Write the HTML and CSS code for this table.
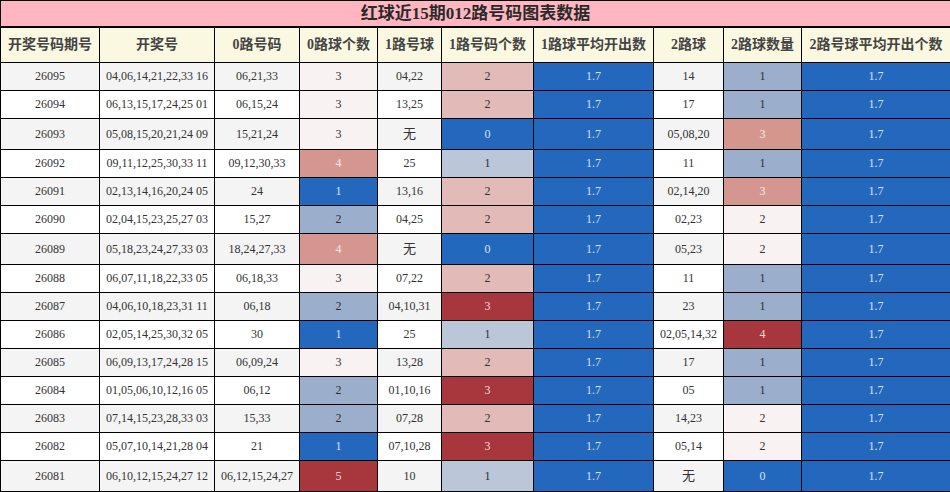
FILE: index.html
```html
<!DOCTYPE html>
<html lang="zh-CN">
<head>
<meta charset="utf-8">
<title>红球近15期012路号码图表数据</title>
<link rel="stylesheet" href="styles.css">
</head>
<body>
<table class="chart">
  <colgroup>
    <col class="w1"><col class="w2"><col class="w3"><col class="w4"><col class="w5">
    <col class="w6"><col class="w7"><col class="w8"><col class="w9"><col class="w10">
  </colgroup>
  <thead>
    <tr><th class="title" colspan="10">红球近15期012路号码图表数据</th></tr>
    <tr class="head">
      <th>开奖号码期号</th><th>开奖号</th><th>0路号码</th><th>0路球个数</th><th>1路号球</th>
      <th>1路号码个数</th><th>1路球平均开出数</th><th>2路球</th><th>2路球数量</th><th>2路号球平均开出个数</th>
    </tr>
  </thead>
  <tbody>
    <tr class="odd"><td>26095</td><td>04,06,14,21,22,33 16</td><td>06,21,33</td><td class="vlp">3</td><td>04,22</td><td class="lp">2</td><td class="blue">1.7</td><td>14</td><td class="bg">1</td><td class="blue">1.7</td></tr>
    <tr><td>26094</td><td>06,13,15,17,24,25 01</td><td>06,15,24</td><td class="vlp">3</td><td>13,25</td><td class="lp">2</td><td class="blue">1.7</td><td>17</td><td class="bg">1</td><td class="blue">1.7</td></tr>
    <tr class="odd"><td>26093</td><td>05,08,15,20,21,24 09</td><td>15,21,24</td><td class="vlp">3</td><td class="none">无</td><td class="blue">0</td><td class="blue">1.7</td><td>05,08,20</td><td class="mp">3</td><td class="blue">1.7</td></tr>
    <tr><td>26092</td><td>09,11,12,25,30,33 11</td><td>09,12,30,33</td><td class="mp">4</td><td>25</td><td class="lbg">1</td><td class="blue">1.7</td><td>11</td><td class="bg">1</td><td class="blue">1.7</td></tr>
    <tr class="odd"><td>26091</td><td>02,13,14,16,20,24 05</td><td>24</td><td class="blue">1</td><td>13,16</td><td class="lp">2</td><td class="blue">1.7</td><td>02,14,20</td><td class="mp">3</td><td class="blue">1.7</td></tr>
    <tr><td>26090</td><td>02,04,15,23,25,27 03</td><td>15,27</td><td class="bg">2</td><td>04,25</td><td class="lp">2</td><td class="blue">1.7</td><td>02,23</td><td class="vlp">2</td><td class="blue">1.7</td></tr>
    <tr class="odd"><td>26089</td><td>05,18,23,24,27,33 03</td><td>18,24,27,33</td><td class="mp">4</td><td class="none">无</td><td class="blue">0</td><td class="blue">1.7</td><td>05,23</td><td class="vlp">2</td><td class="blue">1.7</td></tr>
    <tr><td>26088</td><td>06,07,11,18,22,33 05</td><td>06,18,33</td><td class="vlp">3</td><td>07,22</td><td class="lp">2</td><td class="blue">1.7</td><td>11</td><td class="bg">1</td><td class="blue">1.7</td></tr>
    <tr class="odd"><td>26087</td><td>04,06,10,18,23,31 11</td><td>06,18</td><td class="bg">2</td><td>04,10,31</td><td class="dr">3</td><td class="blue">1.7</td><td>23</td><td class="bg">1</td><td class="blue">1.7</td></tr>
    <tr><td>26086</td><td>02,05,14,25,30,32 05</td><td>30</td><td class="blue">1</td><td>25</td><td class="lbg">1</td><td class="blue">1.7</td><td>02,05,14,32</td><td class="dr">4</td><td class="blue">1.7</td></tr>
    <tr class="odd"><td>26085</td><td>06,09,13,17,24,28 15</td><td>06,09,24</td><td class="vlp">3</td><td>13,28</td><td class="lp">2</td><td class="blue">1.7</td><td>17</td><td class="bg">1</td><td class="blue">1.7</td></tr>
    <tr><td>26084</td><td>01,05,06,10,12,16 05</td><td>06,12</td><td class="bg">2</td><td>01,10,16</td><td class="dr">3</td><td class="blue">1.7</td><td>05</td><td class="bg">1</td><td class="blue">1.7</td></tr>
    <tr class="odd"><td>26083</td><td>07,14,15,23,28,33 03</td><td>15,33</td><td class="bg">2</td><td>07,28</td><td class="lp">2</td><td class="blue">1.7</td><td>14,23</td><td class="vlp">2</td><td class="blue">1.7</td></tr>
    <tr><td>26082</td><td>05,07,10,14,21,28 04</td><td>21</td><td class="blue">1</td><td>07,10,28</td><td class="dr">3</td><td class="blue">1.7</td><td>05,14</td><td class="vlp">2</td><td class="blue">1.7</td></tr>
    <tr class="odd"><td>26081</td><td>06,10,12,15,24,27 12</td><td>06,12,15,24,27</td><td class="dr">5</td><td>10</td><td class="lbg">1</td><td class="blue">1.7</td><td class="none">无</td><td class="blue">0</td><td class="blue">1.7</td></tr>
  </tbody>
</table>
</body>
</html>
```
FILE: styles.css
```css
html, body {
  margin: 0;
  padding: 0;
  background: #ffffff;
}

.chart {
  width: 950px;
  border-collapse: collapse;
  table-layout: fixed;
  font-family: "Liberation Serif", "Noto Sans CJK SC", serif;
  font-size: 12px;
  color: #333333;
}

.w1 { width: 99px; }
.w2 { width: 115px; }
.w3 { width: 85px; }
.w4 { width: 78px; }
.w5 { width: 64px; }
.w6 { width: 92px; }
.w7 { width: 120px; }
.w8 { width: 70px; }
.w9 { width: 78px; }
.w10 { width: 149px; }

.chart th,
.chart td {
  border: 1px solid #000000;
  text-align: center;
  vertical-align: middle;
  white-space: nowrap;
  overflow: hidden;
}

.chart td {
  padding: 6px 2px 7px;
  line-height: 14px;
  background: #ffffff;
}

.chart td.none {
  line-height: 17px;
  font-size: 13px;
}

.chart .title {
  background: #ffb6c1;
  font-size: 17px;
  line-height: 25px;
  font-weight: bold;
  color: #2a2a2a;
  padding: 0;
  border-bottom: 2px solid #000000;
}

.head th {
  background: #faf8e0;
  font-size: 14px;
  line-height: 20px;
  font-weight: bold;
  color: #444444;
  padding: 7px 1px 7px;
}

.chart tr.odd td { background: #f4f4f4; }

.chart tr td.vlp { background: #f8f2f2; color: #333333; }
.chart tr td.lp { background: #e2bab8; color: #333333; }
.chart tr td.mp { background: #d4968f; color: #f7eaea; }
.chart tr td.dr { background: #a8373d; color: #f2dede; }
.chart tr td.blue { background: #2468bd; color: #d6e2f3; }
.chart tr td.bg { background: #9bafcd; color: #2e2e2e; }
.chart tr td.lbg { background: #bcc6d9; color: #2e2e2e; }
```
